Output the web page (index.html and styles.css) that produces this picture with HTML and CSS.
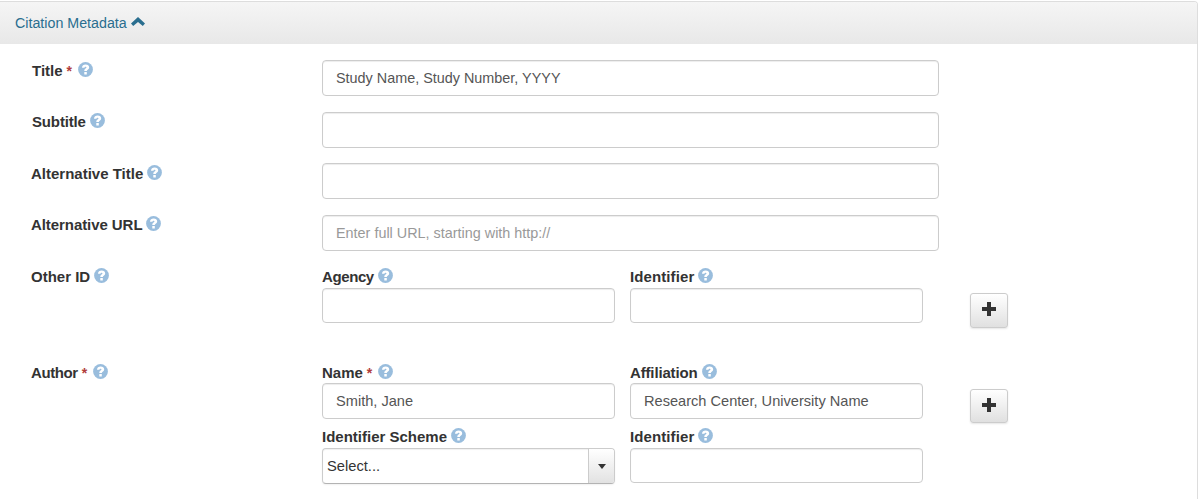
FILE: index.html
```html
<!DOCTYPE html>
<html lang="en">
<head>
<meta charset="utf-8">
<title>Citation Metadata</title>
<link rel="stylesheet" href="styles.css">
</head>
<body>
<svg class="defs" width="0" height="0">
  <symbol id="help" viewBox="0 0 15 15"><circle cx="7.5" cy="7.500" r="7.400" fill="#99bddd"/><path d="M4 5.700C4.100 3.500 5.500 2.600 7.600 2.600c2.200 0 3.600 1.100 3.600 2.800 0 2-2.400 2-2.400 3.600H6.300c0-2.400 2.200-2.500 2.200-3.400 0-1.100-1.900-1-2 .1zM6.300 10h2.500v2.400H6.300z" fill="#fff"/></symbol>
  <symbol id="plus" viewBox="0 0 14 14"><path d="M5 0h4v5h5v4H9v5H5V9H0V5h5z" fill="#333"/></symbol>
</svg>
<section class="panel">
  <header class="panel-head"><span class="panel-title">Citation Metadata</span><svg class="chevron" viewBox="0 0 14 9"><path d="M7 0l7 6.500L11.800 9 7 4.900 2.200 9 0 6.500z" fill="#2a6e8f"/></svg></header>
  <form class="form">
    <div class="row">
      <label class="label first drop"><span class="t">Title</span><b class="req">*</b><svg class="help"><use href="#help"/></svg></label>
      <div class="input">Study Name, Study Number, YYYY</div>
    </div>
    <div class="row short">
      <label class="label first"><span class="t tight">Subtitle</span><svg class="help"><use href="#help"/></svg></label>
      <div class="input"></div>
    </div>
    <div class="row">
      <label class="label drop"><span class="t">Alternative Title</span><svg class="help"><use href="#help"/></svg></label>
      <div class="input"></div>
    </div>
    <div class="row">
      <label class="label"><span class="t slight">Alternative URL</span><svg class="help"><use href="#help"/></svg></label>
      <div class="input placeholder">Enter full URL, starting with http://</div>
    </div>
    <div class="row compound">
      <label class="label"><span class="t">Other ID</span><svg class="help"><use href="#help"/></svg></label>
      <div class="fields">
        <div class="field"><label class="label tall"><span class="t tighter">Agency</span><svg class="help"><use href="#help"/></svg></label><div class="input low"></div></div>
        <div class="field"><label class="label tall"><span class="t loose">Identifier</span><svg class="help"><use href="#help"/></svg></label><div class="input low"></div></div>
      </div>
      <span class="add"><svg class="plus"><use href="#plus"/></svg></span>
    </div>
    <div class="row compound">
      <label class="label"><span class="t tighter">Author</span><b class="req">*</b><svg class="help"><use href="#help"/></svg></label>
      <div class="fields">
        <div class="field"><label class="label"><span class="t">Name</span><b class="req">*</b><svg class="help"><use href="#help"/></svg></label><div class="input person">Smith, Jane</div></div>
        <div class="field"><label class="label"><span class="t tight">Affiliation</span><svg class="help"><use href="#help"/></svg></label><div class="input person">Research Center, University Name</div></div>
        <div class="field"><label class="label tall"><span class="t">Identifier Scheme</span><svg class="help"><use href="#help"/></svg></label><div class="select"><span class="value">Select...</span><span class="trigger"><i class="caret"></i></span></div></div>
        <div class="field"><label class="label tall"><span class="t loose">Identifier</span><svg class="help"><use href="#help"/></svg></label><div class="input low"></div></div>
      </div>
      <span class="add small"><svg class="plus"><use href="#plus"/></svg></span>
    </div>
  </form>
</section>
</body>
</html>
```
FILE: styles.css
```css
* { box-sizing: border-box; }
body { margin: 0; padding-top: 1px; height: 499px; overflow: hidden; background: #fff; color: #333; font: 14px/20px "Liberation Sans", Arial, sans-serif; }
.defs { display: none; }
.panel { width: 1198px; height: 520px; border: 1px solid #ddd; border-left: 0; border-radius: 0 4px 0 0; }
.panel-head { height: 42px; display: flex; align-items: center; gap: 4px; padding-left: 15px; background: linear-gradient(#f5f5f5, #e8e8e8); border-radius: 0 3px 0 0; color: #2a6e8f; font-size: 14.25px; }
.chevron { width: 14px; height: 9px; margin-bottom: 3px; }
.form { padding: 16px 0 0 31px; }
.row { display: grid; grid-template-columns: 291px 617px; height: 52px; align-items: start; }
.row.short { height: 51px; }
.row.compound { grid-template-columns: 291px 648px 38px; height: 96px; }
.label { display: flex; align-items: center; height: 20px; font-weight: bold; font-size: 15px; white-space: nowrap; }
.label.first { padding-left: 1px; }
.label.drop { height: 22px; }
.label.tall { height: 21px; padding-bottom: 2px; }
.label.tall .help { margin-bottom: 2px; }
.slight { letter-spacing: -.07px; }
.tight { letter-spacing: -.15px; }
.tighter { letter-spacing: -.4px; }
.loose { letter-spacing: .1px; }
.req { color: #b13c3c; margin-left: 4px; font-size: 14px; }
.help { width: 15px; height: 15px; margin: 0 0 3px 4px; flex: none; }
.req + .help { margin-left: 6px; }
.fields { display: grid; grid-template-columns: 293px 293px; column-gap: 15px; row-gap: 8px; }
.input { height: 36px; padding: 0 13px; line-height: 34px; border: 1px solid #ccc; border-radius: 4px; box-shadow: inset 0 1px 1px rgba(0,0,0,.075); color: #555; background: #fff; white-space: nowrap; font-size: 14.4px; }
.input.person { font-size: 14.6px; }
.input.low { height: 35px; }
.input.placeholder { color: #999; }
.select { display: flex; height: 36px; border: 1px solid #ccc; border-bottom-color: #b3b3b3; border-radius: 4px; overflow: hidden; box-shadow: 0 1px 2px rgba(0,0,0,.06), inset 0 1px 1px rgba(0,0,0,.06); line-height: 34px; }
.value { flex: 1; padding-left: 4px; color: #333; font-size: 14.7px; }
.trigger { width: 26px; border-left: 1px solid #ccc; background: linear-gradient(#fff, #e2e2e2); display: grid; place-items: center; }
.caret { border: 4px solid transparent; border-top: 5px solid #333; border-bottom: 0; margin-top: 1px; }
.add { width: 38px; height: 35px; margin-top: 26px; border: 1px solid #ccc; border-radius: 3px; background: linear-gradient(#fff, #e0e0e0); box-shadow: 0 1px 2px rgba(0,0,0,.1); display: grid; justify-items: center; padding-top: 8px; }
.add.small { height: 34px; }
.plus { width: 14px; height: 14px; }
```
